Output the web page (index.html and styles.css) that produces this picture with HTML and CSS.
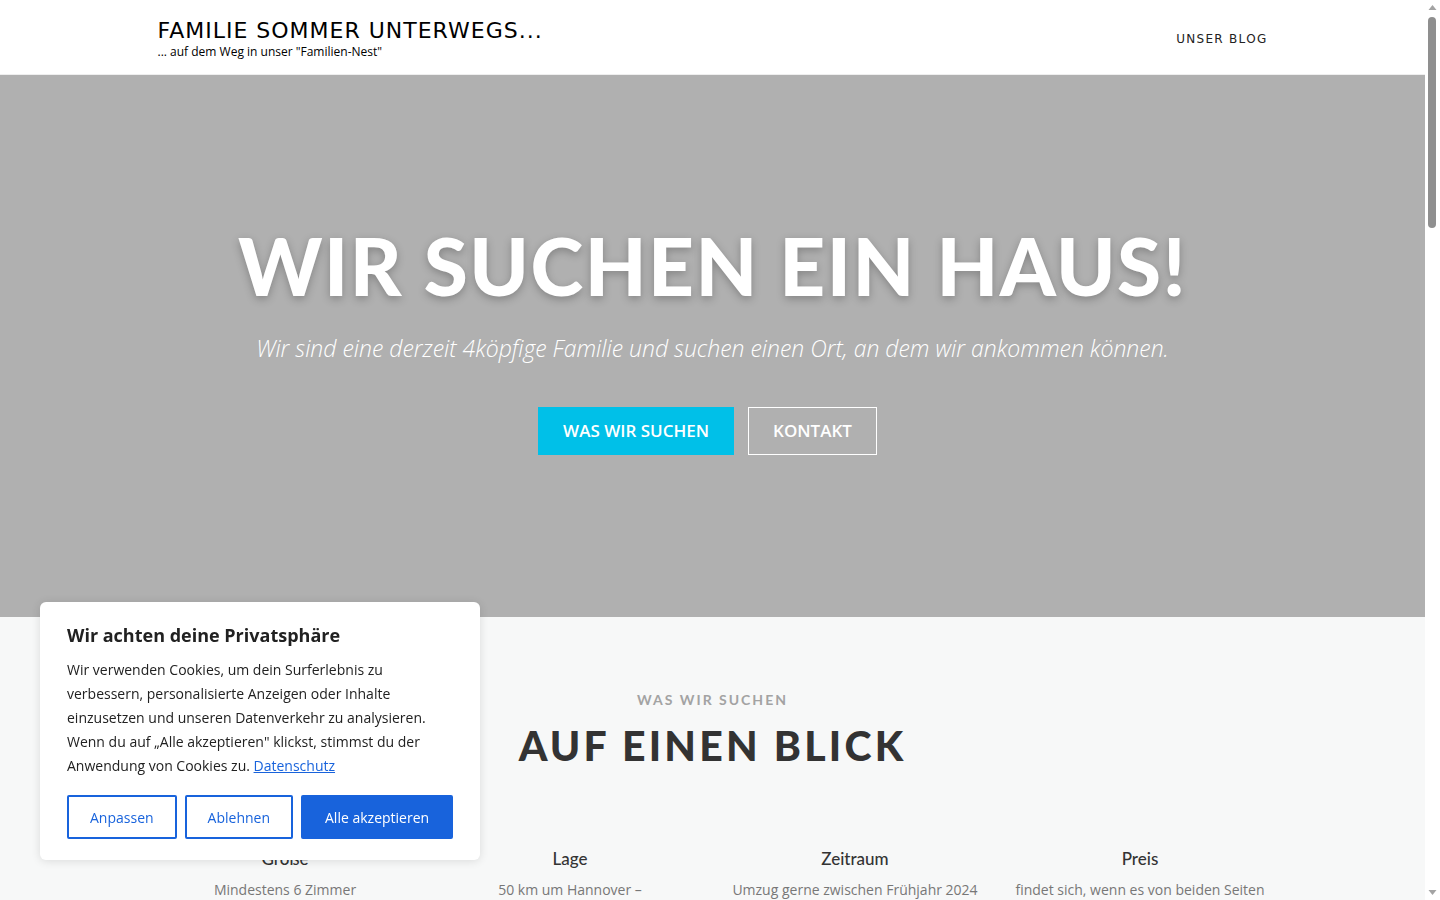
FILE: index.html
```html
<!DOCTYPE html>
<html lang="de">

<head>
    <meta charset="UTF-8">
    <meta name="viewport" content="width=device-width, initial-scale=1.0">
    <title>Familie Sommer unterwegs...</title>
    <link rel="stylesheet" href="styles.css">
</head>

<body>
    <!-- Kopfzeile -->
    <header class="site-header">
        <div class="container header-inner">
            <div class="brand">
                <a class="brand-title" href="#">Familie Sommer unterwegs...</a>
                <p class="brand-tagline">... auf dem Weg in unser "Familien-Nest"</p>
            </div>
            <nav class="main-nav">
                <a href="#">Unser Blog</a>
            </nav>
        </div>
    </header>

    <!-- Hero -->
    <section class="hero">
        <h1>Wir suchen ein Haus!</h1>
        <p class="hero-lead">Wir sind eine derzeit 4köpfige Familie und suchen einen Ort, an dem wir ankommen können.</p>
        <div class="hero-buttons">
            <a class="btn btn-primary" href="#suchen">Was wir suchen</a>
            <a class="btn btn-outline" href="#kontakt">Kontakt</a>
        </div>
    </section>

    <!-- Was wir suchen -->
    <section class="features" id="suchen">
        <div class="container">
            <p class="section-label">Was wir suchen</p>
            <h2 class="section-title">Auf einen Blick</h2>
            <div class="feature-grid">
                <div class="feature">
                    <h3>Größe</h3>
                    <p>Mindestens 6 Zimmer</p>
                </div>
                <div class="feature">
                    <h3>Lage</h3>
                    <p>50 km um Hannover –</p>
                </div>
                <div class="feature">
                    <h3>Zeitraum</h3>
                    <p>Umzug gerne zwischen Frühjahr 2024</p>
                </div>
                <div class="feature">
                    <h3>Preis</h3>
                    <p>findet sich, wenn es von beiden Seiten</p>
                </div>
            </div>
        </div>
    </section>

    <!-- Cookie-Hinweis -->
    <div class="cookie-box">
        <p class="cookie-title">Wir achten deine Privatsphäre</p>
        <p class="cookie-text">Wir verwenden Cookies, um dein Surferlebnis zu verbessern, personalisierte Anzeigen oder Inhalte einzusetzen und unseren Datenverkehr zu analysieren. Wenn du auf „Alle akzeptieren" klickst, stimmst du der Anwendung von Cookies zu. <a href="#">Datenschutz</a></p>
        <div class="cookie-buttons">
            <button class="cookie-btn">Anpassen</button>
            <button class="cookie-btn">Ablehnen</button>
            <button class="cookie-btn cookie-accept">Alle akzeptieren</button>
        </div>
    </div>

    <!-- Scrollleiste -->
    <div class="scrollbar">
        <svg class="scroll-arrow" width="15" height="15" viewBox="0 0 15 15"><path d="M3.5 10h8l-4-5z" fill="#a3a3a3"/></svg>
        <div class="scroll-track"><div class="scroll-thumb"></div></div>
        <svg class="scroll-arrow" width="15" height="15" viewBox="0 0 15 15"><path d="M3.5 5h8l-4 5z" fill="#a3a3a3"/></svg>
    </div>
</body>

</html>
```

FILE: styles.css
```css
body {
    margin: 0 15px 0 0;
    font-family: "Open Sans", sans-serif;
    color: #333;
    background-color: #f7f8f8;
    overflow: hidden;
}

a {
    text-decoration: none;
}

.container {
    width: 1110px;
    margin: 0 auto;
}

/* Kopfzeile */
.site-header {
    background-color: #fff;
    height: 74px;
    border-bottom: 1px solid #eee;
}

.header-inner {
    display: flex;
    justify-content: space-between;
    align-items: center;
    height: 100%;
}

.brand {
    padding-top: 4px;
}

.brand-title {
    display: block;
    font-family: "DejaVu Sans", sans-serif;
    font-size: 22px;
    letter-spacing: 1px;
    text-transform: uppercase;
    color: #000;
    line-height: 24px;
}

.brand-tagline {
    margin: 1px 0 0;
    font-size: 12px;
    line-height: 16px;
    color: #000;
}

.main-nav a {
    font-family: "DejaVu Sans", sans-serif;
    font-size: 12px;
    font-weight: 500;
    letter-spacing: 1.3px;
    text-transform: uppercase;
    color: #222;
}

/* Hero */
.hero {
    background-color: #b0b0b0;
    height: 542px;
    display: flex;
    flex-direction: column;
    align-items: center;
    padding-top: 145px;
    box-sizing: border-box;
    text-align: center;
    color: #fff;
}

.hero h1 {
    margin: 0;
    font-family: "Lato", sans-serif;
    font-weight: 900;
    font-size: 80px;
    line-height: 90px;
    letter-spacing: 1.5px;
    text-transform: uppercase;
    text-shadow: 0 3px 8px rgba(0, 0, 0, 0.25);
}

.hero-lead {
    margin: 23px 0 0;
    font-size: 23px;
    font-style: italic;
    font-weight: 300;
    line-height: 30px;
}

.hero-buttons {
    display: flex;
    gap: 14px;
    margin: 44px 10px 0 0;
}

.btn {
    display: block;
    height: 48px;
    line-height: 46px;
    box-sizing: border-box;
    padding: 0 24px;
    font-size: 17px;
    font-weight: 600;
    text-transform: uppercase;
    color: #fff;
    border: 1px solid transparent;
}

.btn-primary {
    background-color: #00c0e8;
    border-color: #00c0e8;
}

.btn-outline {
    padding: 0 24px;
    border-color: #fff;
}

/* Was wir suchen */
.features {
    padding-top: 73px;
    min-height: 700px;
    text-align: center;
}

.section-label {
    margin: 0;
    font-family: "Lato", sans-serif;
    font-size: 14px;
    font-weight: 700;
    letter-spacing: 2px;
    text-transform: uppercase;
    color: #a3a3a3;
    line-height: 20px;
}

.section-title {
    margin: 11px 0 0;
    font-family: "Lato", sans-serif;
    font-weight: 900;
    font-size: 41px;
    letter-spacing: 3.2px;
    text-transform: uppercase;
    color: #333;
    line-height: 50px;
}

.feature-grid {
    display: grid;
    grid-template-columns: repeat(4, 1fr);
    width: 1140px;
    margin: 76px -15px 0;
}

.feature h3 {
    margin: 0;
    font-family: "Lato", sans-serif;
    font-size: 17px;
    font-weight: 500;
    color: #333;
    line-height: 24px;
}

.feature p {
    margin: 9px 0 0;
    font-size: 14px;
    color: #777;
    line-height: 20px;
}

/* Cookie-Hinweis */
.cookie-box {
    position: fixed;
    left: 40px;
    top: 602px;
    width: 440px;
    box-sizing: border-box;
    padding: 21px 27px 21px;
    background-color: #fff;
    border-radius: 6px;
    box-shadow: 0 1px 10px rgba(0, 0, 0, 0.12);
}

.cookie-title {
    margin: 0;
    font-size: 18px;
    font-weight: 700;
    color: #212121;
    line-height: 24px;
}

.cookie-text {
    margin: 11px 0 0;
    font-size: 14px;
    line-height: 24px;
    color: #212121;
}

.cookie-text a {
    color: #1863dc;
    text-decoration: underline;
}

.cookie-buttons {
    display: flex;
    gap: 8px;
    margin-top: 17px;
}

.cookie-btn {
    flex: none;
    height: 44px;
    padding: 0 21px;
    font-family: "Open Sans", sans-serif;
    font-size: 14px;
    white-space: nowrap;
    color: #1863dc;
    background-color: #fff;
    border: 2px solid #1863dc;
    border-radius: 2px;
}

.cookie-accept {
    padding: 0 22px;
    color: #fff;
    background-color: #1863dc;
}

/* Scrollleiste */
.scrollbar {
    position: fixed;
    top: 0;
    right: 0;
    width: 15px;
    height: 100vh;
    background-color: #fff;
    display: flex;
    flex-direction: column;
}

.scroll-arrow {
    display: block;
    flex: none;
}

.scroll-track {
    flex: 1;
    padding-top: 2px;
}

.scroll-thumb {
    width: 8px;
    height: 211px;
    margin-left: 3px;
    background-color: #8f8f8f;
    border-radius: 4px;
}
```
